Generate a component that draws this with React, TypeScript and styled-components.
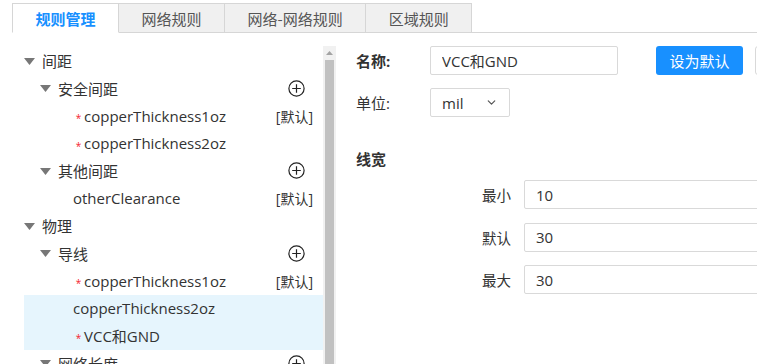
import styled, { createGlobalStyle } from "styled-components";
import { ChevronDown } from "lucide-react";

const GlobalStyle = createGlobalStyle`
  html, body {
    margin: 0;
    padding: 0;
    overflow: hidden;
    background: #fff;
  }
  body {
    font-family: "Open Sans", "Noto Sans CJK SC", sans-serif;
    color: #333;
  }
  * {
    box-sizing: border-box;
  }
`;

type TreeItem = {
  level: 0 | 1 | 2;
  label: string;
  star?: boolean;
  add?: boolean;
  isDefault?: boolean;
  selected?: boolean;
};

const tabs = ["规则管理", "网络规则", "网络-网络规则", "区域规则"];

const tree: TreeItem[] = [
  { level: 0, label: "间距" },
  { level: 1, label: "安全间距", add: true },
  { level: 2, label: "copperThickness1oz", star: true, isDefault: true },
  { level: 2, label: "copperThickness2oz", star: true },
  { level: 1, label: "其他间距", add: true },
  { level: 2, label: "otherClearance", isDefault: true },
  { level: 0, label: "物理" },
  { level: 1, label: "导线", add: true },
  { level: 2, label: "copperThickness1oz", star: true, isDefault: true },
  { level: 2, label: "copperThickness2oz", selected: true },
  { level: 2, label: "VCC和GND", star: true, selected: true },
  { level: 1, label: "网络长度", add: true },
  { level: 2, label: "netLength", isDefault: true },
];

const widthRows = [
  { label: "最小", value: "10" },
  { label: "默认", value: "30" },
  { label: "最大", value: "30" },
];

const TabBar = styled.div`
  display: flex;
  padding: 3px 0 0 12px;
  height: 33px;
`;

const Tab = styled.div<{ $active?: boolean }>`
  display: flex;
  align-items: center;
  justify-content: center;
  height: 30px;
  padding: 0 22.5px;
  font-family: "Noto Sans CJK SC", sans-serif;
  font-size: 15px;
  border: 1px solid #d6d6d6;
  border-left: ${({ $active }) => ($active ? "1px solid #d6d6d6" : "none")};
  border-bottom: ${({ $active }) => ($active ? "1px solid #fff" : "1px solid #d6d6d6")};
  background: ${({ $active }) => ($active ? "#fff" : "#f0f0f0")};
  color: ${({ $active }) => ($active ? "#1890ff" : "#555")};
  font-weight: ${({ $active }) => ($active ? 700 : 400)};
`;

const TabFill = styled.div`
  flex: 1;
  border-bottom: 1px solid #d6d6d6;
`;

const Body = styled.div`
  display: flex;
  height: calc(100vh - 33px);
  overflow: hidden;
`;

const LeftPanel = styled.div`
  display: flex;
  width: 336px;
  flex-shrink: 0;
  padding: 12px 0 0 24px;
`;

const Tree = styled.div`
  width: 299px;
  padding-top: 2px;
`;

const Row = styled.div<{ $level: number; $selected?: boolean }>`
  display: flex;
  align-items: center;
  height: 27.5px;
  padding-left: ${({ $level }) => ($level === 0 ? 0 : $level === 1 ? 16 : 49)}px;
  font-size: 15px;
  color: #333;
  background: ${({ $selected }) => ($selected ? "#e6f5fd" : "transparent")};
  white-space: nowrap;
`;

const Caret = styled.svg`
  width: 11px;
  height: 8px;
  margin: 2px 7px 0 0;
  flex-shrink: 0;
`;

const Star = styled.span`
  display: inline-flex;
  justify-content: center;
  width: 11px;
  padding-top: 5px;
  color: #f5222d;
  font-size: 10px;
  line-height: 1;
`;

const Trailing = styled.span<{ $right: number }>`
  margin-left: auto;
  margin-right: ${({ $right }) => $right}px;
  display: flex;
  align-items: center;
  font-size: 14px;
  color: #333;
`;

const Scrollbar = styled.div`
  display: flex;
  flex-direction: column;
  align-items: center;
  width: 13px;
  background: #f1f1f1;
  margin-top: 1px;
`;

const ScrollArrow = styled.div`
  height: 14px;
  display: flex;
  align-items: center;
  justify-content: center;
`;

const Thumb = styled.div`
  flex: 1;
  width: 9px;
  background: #c1c1c1;
`;

const RightPanel = styled.div`
  flex: 1;
  padding: 13px 0 0 20px;
  min-width: 0;
`;

const FieldRow = styled.div`
  display: flex;
  align-items: center;
  height: 29px;
  margin-bottom: 13px;
`;

const FieldLabel = styled.div<{ $bold?: boolean }>`
  width: 74px;
  font-size: 15px;
  font-weight: ${({ $bold }) => ($bold ? 700 : 400)};
  color: #333;
  flex-shrink: 0;
`;

const TextInput = styled.input<{ $width: number }>`
  width: ${({ $width }) => $width}px;
  height: 29px;
  flex-shrink: 0;
  border: 1px solid #d9d9d9;
  border-radius: 2px;
  padding: 0 11px;
  font-family: "Open Sans", "Noto Sans CJK SC", sans-serif;
  font-size: 15px;
  color: #333;
  outline: none;
  background: #fff;
`;

const PrimaryButton = styled.button`
  margin-left: 38px;
  width: 87px;
  height: 29px;
  flex-shrink: 0;
  border: none;
  border-radius: 3px;
  background: #1890ff;
  color: #fff;
  font-family: "Noto Sans CJK SC", sans-serif;
  font-size: 15px;
`;

const GhostButton = styled.button`
  margin-left: 12px;
  width: 80px;
  height: 29px;
  flex-shrink: 0;
  border: 1px solid #d9d9d9;
  border-radius: 3px;
  background: #fff;
`;

const Select = styled.div`
  display: flex;
  align-items: center;
  justify-content: space-between;
  width: 80px;
  height: 29px;
  padding: 0 11px 0 11px;
  border: 1px solid #d9d9d9;
  border-radius: 2px;
  font-size: 15px;
  color: #333;
`;

const SectionTitle = styled.div`
  margin-top: 32px;
  font-size: 15px;
  font-weight: 700;
  color: #333;
  height: 20px;
  line-height: 20px;
`;

const WidthList = styled.div`
  display: flex;
  flex-direction: column;
  gap: 13.5px;
  margin-top: 11px;
`;

const WidthRow = styled.div`
  display: flex;
  align-items: center;
`;

const WidthLabel = styled.div`
  width: 155px;
  flex-shrink: 0;
  text-align: right;
  font-size: 14.5px;
  color: #333;
  margin-right: 13px;
`;

function PlusCircle() {
  return (
    <svg width="17" height="17" viewBox="0 0 17 17">
      <circle cx="8.5" cy="8.5" r="7.6" fill="none" stroke="#222" strokeWidth="1.2" />
      <path d="M8.5 4.2v8.6M4.2 8.5h8.6" stroke="#222" strokeWidth="1.2" />
    </svg>
  );
}

export default function App() {
  return (
    <>
      <GlobalStyle />
      <TabBar>
        {tabs.map((t, i) => (
          <Tab key={t} $active={i === 0}>
            {t}
          </Tab>
        ))}
        <TabFill />
      </TabBar>
      <Body>
        <LeftPanel>
          <Tree>
            {tree.map((item, i) => (
              <Row key={i} $level={item.level} $selected={item.selected}>
                {item.level < 2 && (
                  <Caret viewBox="0 0 11 8">
                    <polygon points="0,0 11,0 5.5,7" fill="#777" />
                  </Caret>
                )}
                {item.star && <Star>*</Star>}
                {item.label}
                {item.add && (
                  <Trailing $right={18}>
                    <PlusCircle />
                  </Trailing>
                )}
                {item.isDefault && <Trailing $right={10}>[默认]</Trailing>}
              </Row>
            ))}
          </Tree>
          <Scrollbar>
            <ScrollArrow>
              <svg width="7" height="4" viewBox="0 0 7 4">
                <polygon points="0,4 7,4 3.5,0" fill="#a3a3a3" />
              </svg>
            </ScrollArrow>
            <Thumb />
          </Scrollbar>
        </LeftPanel>
        <RightPanel>
          <FieldRow>
            <FieldLabel $bold>名称:</FieldLabel>
            <TextInput $width={188} value="VCC和GND" readOnly />
            <PrimaryButton>设为默认</PrimaryButton>
            <GhostButton />
          </FieldRow>
          <FieldRow>
            <FieldLabel>单位:</FieldLabel>
            <Select>
              mil
              <ChevronDown size={13} strokeWidth={2.2} color="#555" />
            </Select>
          </FieldRow>
          <SectionTitle>线宽</SectionTitle>
          <WidthList>
            {widthRows.map((r) => (
              <WidthRow key={r.label}>
                <WidthLabel>{r.label}</WidthLabel>
                <TextInput $width={280} value={r.value} readOnly />
              </WidthRow>
            ))}
          </WidthList>
        </RightPanel>
      </Body>
    </>
  );
}
